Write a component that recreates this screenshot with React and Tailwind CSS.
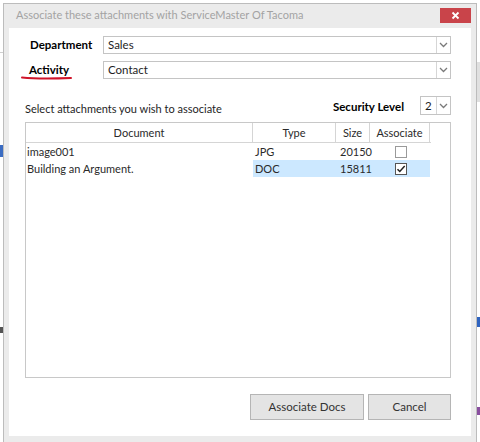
import React from "react";

const docs = [
  { name: "image001", type: "JPG", size: "20150", checked: false },
  { name: "Building an Argument.", type: "DOC", size: "15811", checked: true },
];

const Chevron = () => (
  <svg width="9" height="6" viewBox="0 0 9 6" fill="none">
    <path d="M1 1l3.5 3.5L8 1" stroke="#7a7a7a" strokeWidth="1.3" />
  </svg>
);

const Combo = ({ value, className = "" }) => (
  <div className={`flex items-stretch border border-[#c4c4c4] bg-white ${className}`}>
    <div className="flex-1 pl-[4px] flex items-center text-[11.5px] text-[#1e1e1e] leading-none">{value}</div>
    <div className="w-[14px] border-l border-[#d6d6d6] flex items-center justify-center bg-white">
      <Chevron />
    </div>
  </div>
);

const CheckBox = ({ checked }) => (
  <div className={`w-[12px] h-[12px] border bg-white flex items-center justify-center ${checked ? "border-[#555]" : "border-[#9a9a9a]"}`}>
    {checked && (
      <svg width="10" height="10" viewBox="0 0 10 10" fill="none">
        <path d="M1.5 5.2l2.3 2.3L8.7 2" stroke="#222" strokeWidth="1.5" />
      </svg>
    )}
  </div>
);

export default function App() {
  return (
    <div
      className="w-[480px] h-[442px] bg-white overflow-hidden flex"
      style={{ fontFamily: 'Lato, "Noto Sans", sans-serif' }}
    >
      {/* window behind the dialog, left edge */}
      <div className="w-[3px] flex flex-col">
        <div className="h-[52px]" />
        <div className="h-px bg-[#cfcfcf]" />
        <div className="h-[92px]" />
        <div className="h-[12px] bg-[#3b6cc2]" />
        <div className="h-[170px]" />
        <div className="h-[6px] bg-[#555]" />
      </div>

      {/* dialog */}
      <div className="w-[474px] mt-[3px] h-[442px] border border-[#bcbcbc] bg-[#ebebeb] flex flex-col">
        <div className="h-[24px] flex items-start justify-between">
          <div className="pl-[12px] pt-[5px] text-[11px] text-[#a3a3a3] leading-none whitespace-nowrap">
            Associate these attachments with ServiceMaster Of Tacoma
          </div>
          <div className="mt-[4px] mr-[5px] w-[31px] h-[15px] bg-[#c9444a] flex items-center justify-center">
            <svg width="9" height="9" viewBox="0 0 9 9">
              <path d="M1.5 1.5l6 6M7.5 1.5l-6 6" stroke="#fff" strokeWidth="1.8" />
            </svg>
          </div>
        </div>

        <div className="mx-[5px] h-[408px] bg-white pl-[16px] pr-[20px] flex flex-col">
          {/* department / activity */}
          <div className="mt-[8px] flex items-center h-[18px]">
            <div className="w-[78px] pl-[5px] text-[11.5px] font-bold text-black leading-none">Department</div>
            <Combo value="Sales" className="flex-1 h-[18px]" />
          </div>
          <div className="mt-[7px] flex items-center h-[18px]">
            <div className="w-[78px] pl-[4px] text-[11.5px] font-bold text-black leading-none relative">
              Activity
              <svg className="absolute left-[-4px] top-[11px]" width="52" height="5" viewBox="0 0 52 5">
                <path d="M1 2.5C14 3.8 34 3.6 50 3" stroke="#d0142a" strokeWidth="2" fill="none" strokeLinecap="round" />
              </svg>
            </div>
            <Combo value="Contact" className="flex-1 h-[18px]" />
          </div>

          {/* caption row */}
          <div className="mt-[17px] h-[19px] flex items-end">
            <div className="flex-1 text-[11px] text-[#1e1e1e] leading-none pb-[1px]">
              Select attachments you wish to associate
            </div>
            <div className="self-start pt-[5px] mr-[16px] text-[11.5px] font-bold text-black leading-none">
              Security Level
            </div>
            <Combo value="2" className="w-[31px] h-[19px]" />
          </div>

          {/* attachment grid */}
          <div className="mt-[7px] h-[256px] border border-[#c8c8c8] flex flex-col text-[11px] text-[#2a2a2a] leading-none">
            <div className="flex h-[20px] border-b border-[#d5d5d5] w-[405px]">
              <div className="w-[227px] border-r border-[#d5d5d5] flex items-center justify-center">Document</div>
              <div className="w-[83px] border-r border-[#d5d5d5] flex items-center justify-center">Type</div>
              <div className="w-[34px] border-r border-[#d5d5d5] flex items-center justify-center">Size</div>
              <div className="w-[60px] border-r border-[#d5d5d5] flex items-center justify-center">Associate</div>
            </div>
            {docs.map((d) => (
              <div key={d.name} className="flex h-[17px] w-[405px]">
                <div className="w-[227px] pl-[1px] flex items-center">{d.name}</div>
                <div className={`flex w-[177px] ${d.checked ? "bg-[#cce8ff]" : ""}`}>
                  <div className="w-[84px] pl-[2px] flex items-center">{d.type}</div>
                  <div className="w-[34px] pl-[3px] flex items-center">{d.size}</div>
                  <div className="w-[59px] flex items-center justify-center">
                    <CheckBox checked={d.checked} />
                  </div>
                </div>
              </div>
            ))}
          </div>

          {/* buttons */}
          <div className="mt-[16px] flex justify-end gap-[4px]">
            <button className="w-[114px] h-[26px] border border-[#b5b5b5] bg-[#e4e4e4] text-[11.5px] text-[#333] leading-none">
              Associate Docs
            </button>
            <button className="w-[83px] h-[26px] border border-[#b5b5b5] bg-[#e4e4e4] text-[11.5px] text-[#333] leading-none">
              Cancel
            </button>
          </div>
        </div>
      </div>

      {/* window behind the dialog, right edge */}
      <div className="w-[3px] flex flex-col">
        <div className="h-[62px]" />
        <div className="h-[40px] bg-[#e0e0e0]" />
        <div className="h-[215px]" />
        <div className="h-[10px] bg-[#2f64c0]" />
        <div className="h-[80px]" />
        <div className="h-[8px] bg-[#8a4fa0]" />
      </div>
    </div>
  );
}
